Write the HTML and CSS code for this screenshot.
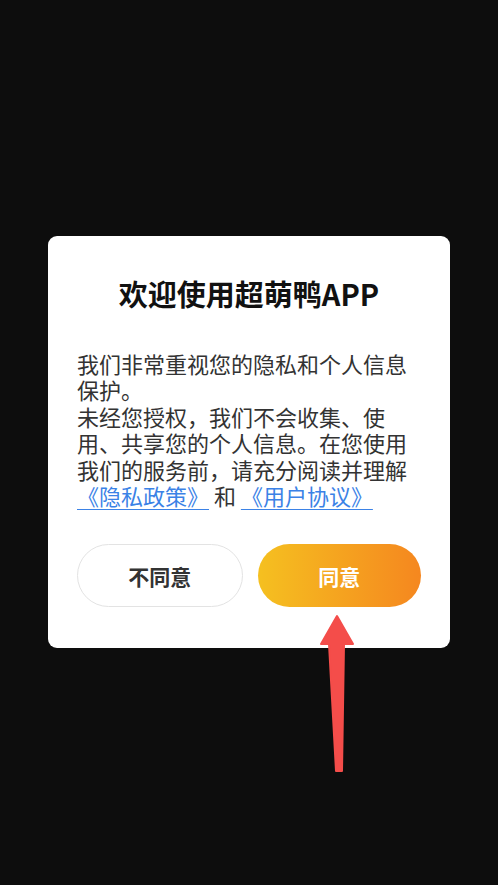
FILE: index.html
```html
<!DOCTYPE html>
<html lang="zh-CN">
<head>
    <meta charset="UTF-8">
    <meta name="viewport" content="width=device-width, initial-scale=1.0">
    <title>隐私协议</title>
    <link rel="stylesheet" href="styles.css">
</head>
<body>
    <div class="overlay">
        <div class="dialog">
            <h1 class="dialog-title">欢迎使用超萌鸭APP</h1>
            <p class="dialog-text">
                我们非常重视您的隐私和个人信息保护。<br>未经您授权，我们不会收集、使用、共享您的个人信息。在您使用我们的服务前，请充分阅读并理解<a href="#" class="link">《隐私政策》</a> 和 <a href="#" class="link">《用户协议》</a>
            </p>
            <div class="actions">
                <button class="btn btn-cancel">不同意</button>
                <button class="btn btn-ok">同意</button>
            </div>
        </div>

        <svg class="arrow" width="40" height="170" viewBox="0 0 40 170">
            <polygon points="19,3 35,31 26,31 24,158 18,158 11,31 3,31" fill="#f44d4a" stroke="#f44d4a" stroke-width="2" stroke-linejoin="round"/>
        </svg>
    </div>
</body>
</html>
```

FILE: styles.css
```css
html, body {
    margin: 0;
    padding: 0;
}
body {
    background-color: #0d0d0d;
    font-family: "Noto Sans CJK SC", "Noto Sans", sans-serif;
    height: 885px;
    overflow: hidden;
}
.overlay {
    position: relative;
    height: 885px;
    padding-top: 236px;
    box-sizing: border-box;
}
.dialog {
    width: 402px;
    margin: 0 auto;
    background-color: #fff;
    border-radius: 9px;
    padding: 40px 29px 41px;
    box-sizing: border-box;
}
.dialog-title {
    margin: 0;
    font-size: 29px;
    line-height: 34px;
    font-weight: bold;
    color: #111;
    text-align: center;
}
.dialog-text {
    margin: 40px 0 0;
    font-size: 22px;
    line-height: 26.4px;
    color: #333;
}
.link {
    display: inline-block;
    color: #3b82e6;
    text-decoration: underline;
    text-decoration-thickness: 1px;
    text-underline-offset: 4px;
}
.actions {
    display: flex;
    gap: 15px;
    margin-top: 36px;
}
.btn {
    flex: 1;
    height: 63px;
    border-radius: 32px;
    font-family: "Noto Sans CJK SC", sans-serif;
    font-size: 21px;
    font-weight: bold;
    cursor: pointer;
}
.btn-cancel {
    background-color: #fff;
    border: 1.5px solid #e3e3e3;
    color: #333;
}
.btn-ok {
    border: none;
    color: #fff;
    background: linear-gradient(90deg, #f5c020, #f5871f);
}
.arrow {
    position: absolute;
    left: 318px;
    top: 613px;
}
```
